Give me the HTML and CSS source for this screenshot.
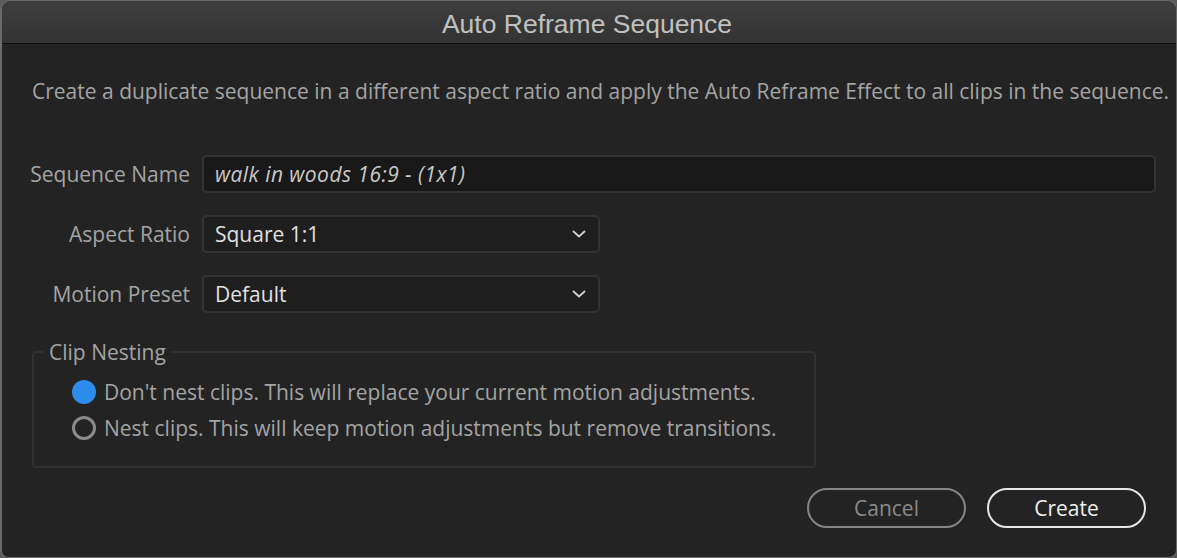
FILE: index.html
```html
<!DOCTYPE html>
<html>
<head>
<meta charset="utf-8">
<link rel="stylesheet" href="styles.css">
</head>
<body>
<div class="window">
  <div class="titlebar">Auto Reframe Sequence</div>
  <div class="content">
    <p class="desc">Create a duplicate sequence in a different aspect ratio and apply the Auto Reframe Effect to all clips in the sequence.</p>
    <div class="form">
      <div class="label"><span>Sequence Name</span></div>
      <div class="field input-wide"><span class="italic">walk in woods 16:9 - (1x1)</span></div>
      <div class="label"><span>Aspect Ratio</span></div>
      <div class="field select"><span>Square 1:1</span>
        <svg class="chev" width="14" height="8" viewBox="0 0 14 8"><path d="M1 1 L7 6.5 L13 1" fill="none" stroke="#d0d0d0" stroke-width="1.8"/></svg>
      </div>
      <div class="label"><span>Motion Preset</span></div>
      <div class="field select"><span>Default</span>
        <svg class="chev" width="14" height="8" viewBox="0 0 14 8"><path d="M1 1 L7 6.5 L13 1" fill="none" stroke="#d0d0d0" stroke-width="1.8"/></svg>
      </div>
    </div>
    <fieldset class="group">
      <legend class="legend">Clip Nesting</legend>
      <div class="radio-row first"><span class="radio checked"></span><span>Don't nest clips. This will replace your current motion adjustments.</span></div>
      <div class="radio-row"><span class="radio"></span><span>Nest clips. This will keep motion adjustments but remove transitions.</span></div>
    </fieldset>
    <div class="buttons">
      <button class="btn cancel">Cancel</button>
      <button class="btn create">Create</button>
    </div>
  </div>
</div>
</body>
</html>
```

FILE: styles.css
```css
html, body {
  margin: 0;
  padding: 0;
  background: #5a5a5a;
}
body {
  width: 1177px;
  height: 558px;
  overflow: hidden;
  font-family: "Open Sans", "Lato", sans-serif;
}
.window {
  box-sizing: border-box;
  width: 1177px;
  height: 558px;
  background: #232323;
  border: 1px solid #6a6a6a;
  border-left: 2px solid #6a6a6a;
  border-radius: 10px 10px 8px 8px;
  overflow: hidden;
  display: flex;
  flex-direction: column;
}
.titlebar {
  height: 42px;
  flex: none;
  background: linear-gradient(#3e3e3e, #333333);
  border-bottom: 1px solid #101010;
  color: #c0c0c0;
  font-family: "Liberation Sans", Arial, sans-serif;
  font-size: 26.5px;
  line-height: 46px;
  text-align: center;
  padding-right: 4px;
}
.content {
  flex: 1;
  padding: 0 20px 0 30px;
  display: flex;
  flex-direction: column;
  color: #a4a4a4;
  font-size: 21px;
}
.desc {
  margin: 34px 0 0 0;
  line-height: 26px;
  white-space: nowrap;
}
.form {
  margin-top: 51px;
  display: grid;
  grid-template-columns: 158px 954px;
  column-gap: 12px;
  row-gap: 22px;
  align-items: center;
}
.label {
  display: flex;
  justify-content: flex-end;
  white-space: nowrap;
  line-height: 26px;
}
.field {
  box-sizing: border-box;
  height: 38px;
  border: 2px solid #333333;
  border-radius: 5px;
  background: #1e1e1e;
  color: #e0e0e0;
  display: flex;
  align-items: center;
  padding: 0 11px;
  line-height: 26px;
}
.input-wide {
  background: #181818;
  color: #c8c8c8;
}
.italic {
  font-style: italic;
  letter-spacing: 0.45px;
}
.select {
  width: 398px;
  justify-content: space-between;
}
.chev {
  margin-right: 1px;
}
.group {
  margin: 27px 0 0 0;
  width: 784px;
  height: 128px;
  box-sizing: border-box;
  border: 2px solid #303030;
  border-radius: 4px;
  padding: 0 0 0 38px;
}
.legend {
  padding: 0 5px;
  margin-left: -28px;
  line-height: 24px;
}
.radio-row {
  display: flex;
  align-items: center;
  gap: 8px;
  height: 36px;
  line-height: 24px;
}
.radio-row.first {
  margin-top: 10px;
}
.radio {
  box-sizing: border-box;
  width: 24px;
  height: 24px;
  border-radius: 50%;
  border: 3px solid #8a8a8a;
  flex: none;
}
.radio.checked {
  border: none;
  background: #2d8ceb;
}
.buttons {
  margin-top: 20px;
  display: flex;
  justify-content: flex-end;
  gap: 21px;
  padding-right: 10px;
}
.btn {
  box-sizing: border-box;
  width: 159px;
  height: 40px;
  border-radius: 20px;
  background: transparent;
  font-family: "Open Sans", "Lato", sans-serif;
  font-size: 21px;
  padding: 0;
}
.cancel {
  border: 2px solid #858585;
  color: #8a8a8a;
}
.create {
  border: 2px solid #e6e6e6;
  color: #f0f0f0;
}
```
